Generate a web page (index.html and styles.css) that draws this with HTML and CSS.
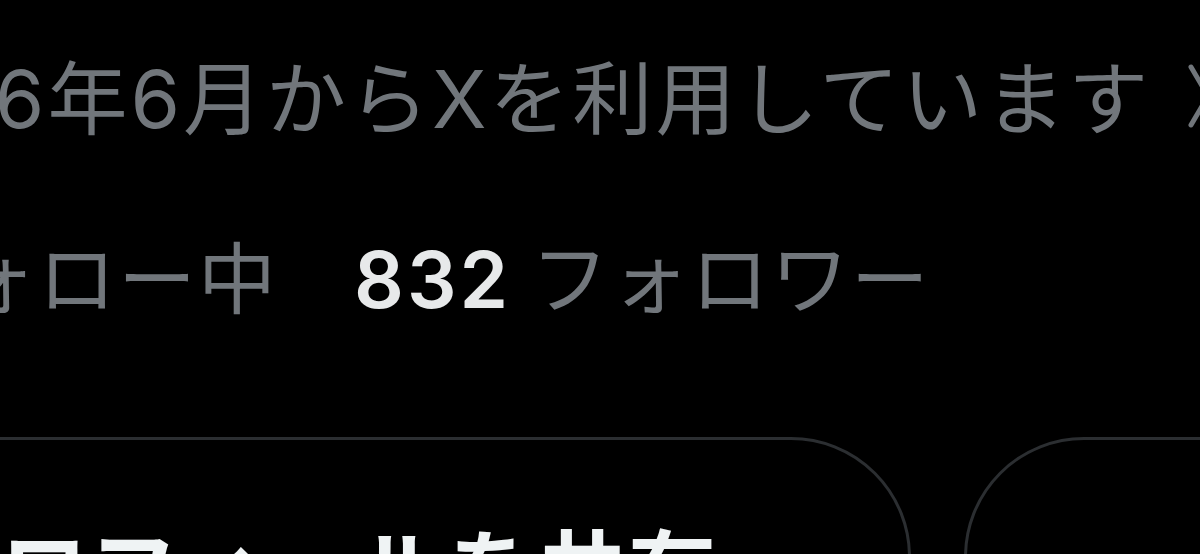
FILE: index.html
```html
<!DOCTYPE html>
<html lang="ja">
<head>
<meta charset="utf-8">
<title>プロフィール</title>
<link rel="stylesheet" href="styles.css">
</head>
<body>
<main class="profile">
  <div class="joined">
    <span class="joined-text"><span class="num">2016</span>年<span class="num">6</span>月から<span class="num">X</span>を利用しています</span>
    <svg class="chev" viewBox="0 0 42 64" width="42" height="64" aria-hidden="true"><polyline points="3,3 20,32 3,61" fill="none" stroke="#71767b" stroke-width="5" stroke-linecap="round" stroke-linejoin="round"/></svg>
  </div>
  <div class="stats">
    <span class="stat first">フォロー中</span>
    <span class="stat"><span class="count">832</span> フォロワー</span>
  </div>
  <div class="actions">
    <button class="btn share">プロフィールを共有</button>
    <button class="btn edit">プロフィールを編集</button>
  </div>
</main>
</body>
</html>
```

FILE: styles.css
```css
html, body {
  margin: 0;
  padding: 0;
  background: #000;
}
body {
  width: 1200px;
  height: 554px;
  overflow: hidden;
  font-family: "Noto Sans CJK JP", sans-serif;
  color: #71767b;
}
.profile {
  padding-top: 56px;
}
.num, .count {
  font-family: Inter, "Noto Sans CJK JP", sans-serif;
}
.joined {
  display: flex;
  align-items: center;
  height: 80px;
  font-size: 80px;
  line-height: 80px;
  letter-spacing: 3px;
  white-space: nowrap;
}
.joined-text {
  margin-left: -146px;
  flex: 1 1 auto;
  min-width: 0;
}
.chev {
  flex: 0 0 auto;
  margin-right: -30px;
}
.stats {
  display: flex;
  margin-top: 98px;
  height: 80px;
  font-size: 78px;
  line-height: 80px;
  letter-spacing: 2px;
  white-space: nowrap;
}
.stat.first {
  margin-left: -122px;
}
.stat + .stat {
  margin-left: 76px;
}
.count {
  color: #e7e9ea;
  font-weight: 600;
  letter-spacing: 3px;
}
.actions {
  display: flex;
  gap: 53px;
  margin-top: 123px;
  margin-left: -283px;
}
.btn {
  flex: 0 0 auto;
  box-sizing: border-box;
  height: 256px;
  border: 3px solid #2b2e31;
  border-radius: 120px;
  background: transparent;
  color: #eff3f4;
  font-family: "Noto Sans CJK JP", sans-serif;
  font-weight: 700;
  font-size: 88px;
  line-height: 88px;
  letter-spacing: 2px;
  padding: 0;
  text-align: center;
  white-space: nowrap;
  align-self: flex-start;
}
.btn.share {
  width: 1194px;
}
.btn.edit {
  width: 1400px;
}
```
